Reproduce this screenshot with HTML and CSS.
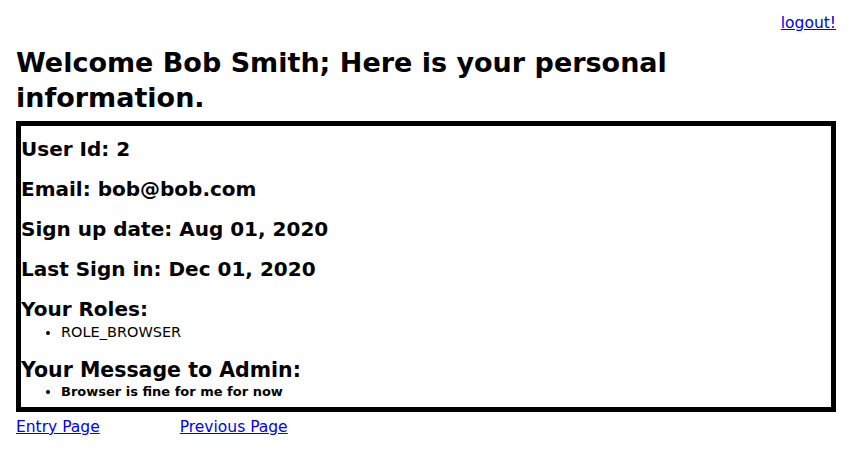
FILE: index.html
```html
<!DOCTYPE html>
<html>
<head>
<meta charset="utf-8">
<link rel="stylesheet" href="styles.css">
</head>
<body>
<div class="page">
  <div class="topbar"><a href="#" class="link">logout!</a></div>
  <h1 class="title">Welcome Bob Smith; Here is your personal information.</h1>
  <div class="box">
    <h3 class="row">User Id: 2</h3>
    <h3 class="row">Email: bob@bob.com</h3>
    <h3 class="row">Sign up date: Aug 01, 2020</h3>
    <h3 class="row">Last Sign in: Dec 01, 2020</h3>
    <h3 class="row section">Your Roles:</h3>
    <ul class="roles"><li>ROLE_BROWSER</li></ul>
    <h3 class="row section msg">Your Message to Admin:</h3>
    <ul class="messages"><li>Browser is fine for me for now</li></ul>
  </div>
  <div class="nav">
    <a href="#" class="link">Entry Page</a>
    <a href="#" class="link">Previous Page</a>
  </div>
</div>
</body>
</html>
```
FILE: styles.css
```css
html, body {
  margin: 0;
  padding: 0;
  background: #fff;
}
.page {
  font-family: "DejaVu Sans", sans-serif;
  color: #000;
  padding: 0 14px 0 16px;
}
.link {
  color: #0000ee;
  text-decoration: underline;
  font-size: 15.5px;
  line-height: 18px;
}
.topbar {
  padding-top: 14px;
  text-align: right;
  line-height: 18px;
  height: 18px;
}
.title {
  margin: 13px 0 0 0;
  font-size: 27px;
  line-height: 35px;
  font-weight: bold;
  max-width: 700px;
}
.box {
  margin-top: 6px;
  border: 5px solid #000;
  padding: 11px 0 7px 0;
}
.row {
  margin: 0 0 16px 0;
  font-size: 20px;
  line-height: 24px;
  font-weight: bold;
}
.section {
  margin-bottom: 2px;
}
.msg {
  margin-top: 17px;
  font-size: 20.5px;
}
.roles, .messages {
  margin: 0;
  padding-left: 40px;
}
.roles li {
  font-size: 14.5px;
  line-height: 18px;
}
.messages li {
  font-size: 13px;
  line-height: 16px;
  font-weight: bold;
}
.nav {
  margin-top: 6px;
  display: flex;
  gap: 80px;
  line-height: 18px;
}
```
